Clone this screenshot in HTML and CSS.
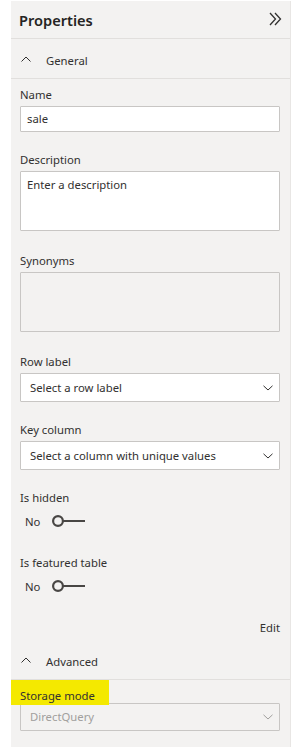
FILE: index.html
```html
<!DOCTYPE html>
<html>
 <head>
  <title>Properties</title>
  <link rel="stylesheet" href="styles.css">
 </head>
<body>
<div class="pane">
 <div class="pane-head">
  <span class="pane-title">Properties</span>
  <svg class="collapse" width="13" height="14" viewBox="0 0 13 14"><path d="M1 1 L6.5 7 L1 13 M6 1 L11.5 7 L6 13" fill="none" stroke="#323130" stroke-width="1.3"/></svg>
 </div>

 <div class="section-head">
  <svg class="chev" width="10" height="6" viewBox="0 0 10 6"><path d="M0.5 5.5 L5 1 L9.5 5.5" fill="none" stroke="#323130" stroke-width="1"/></svg>
  <span>General</span>
 </div>

 <div class="section general">
  <div class="field f-name">
   <label>Name</label>
   <div class="input">sale</div>
  </div>
  <div class="field f-desc">
   <label>Description</label>
   <div class="input area">Enter a description</div>
  </div>
  <div class="field f-syn">
   <label>Synonyms</label>
   <div class="input area disabled"></div>
  </div>
  <div class="field f-row">
   <label>Row label</label>
   <div class="input select">Select a row label
    <svg width="10" height="6" viewBox="0 0 10 6"><path d="M0.5 0.8 L5 5 L9.5 0.8" fill="none" stroke="#323130" stroke-width="1"/></svg>
   </div>
  </div>
  <div class="field f-key">
   <label>Key column</label>
   <div class="input select">Select a column with unique values
    <svg width="10" height="6" viewBox="0 0 10 6"><path d="M0.5 0.8 L5 5 L9.5 0.8" fill="none" stroke="#323130" stroke-width="1"/></svg>
   </div>
  </div>
  <div class="field f-hidden">
   <label>Is hidden</label>
   <div class="toggle"><span>No</span>
    <svg width="36" height="14" viewBox="0 0 36 14"><circle cx="6" cy="7" r="4.9" fill="none" stroke="#484644" stroke-width="2.2"/><path d="M11 7 H33" stroke="#484644" stroke-width="2"/></svg>
   </div>
  </div>
  <div class="field f-feat">
   <label>Is featured table</label>
   <div class="toggle"><span>No</span>
    <svg width="36" height="14" viewBox="0 0 36 14"><circle cx="6" cy="7" r="4.9" fill="none" stroke="#484644" stroke-width="2.2"/><path d="M11 7 H33" stroke="#484644" stroke-width="2"/></svg>
   </div>
  </div>
  <div class="edit">Edit</div>
 </div>

 <div class="section-head">
  <svg class="chev" width="10" height="6" viewBox="0 0 10 6"><path d="M0.5 5.5 L5 1 L9.5 5.5" fill="none" stroke="#323130" stroke-width="1"/></svg>
  <span>Advanced</span>
 </div>

 <div class="section advanced">
  <div class="field f-storage">
   <label><span class="mark">Storage mode</span></label>
   <div class="input select disabled">DirectQuery
    <svg width="10" height="6" viewBox="0 0 10 6"><path d="M0.5 0.8 L5 5 L9.5 0.8" fill="none" stroke="#a19f9d" stroke-width="1"/></svg>
   </div>
  </div>
 </div>
</div>
</body>
</html>
```

FILE: styles.css
```css
body {
 margin: 0;
 background: white;
 font-family: "Noto Sans", sans-serif;
 font-size: 11.3px;
 color: #323130;
}
.pane {
 margin: 1px 0 0 11px;
 height: 746px;
 background: #f3f2f1;
 border-right: 1px solid #e8e6e4;
 overflow: hidden;
}
.pane-head {
 display: flex;
 align-items: center;
 justify-content: space-between;
 height: 37px;
 padding: 0 8px 0 8px;
 border-bottom: 1px solid #e1dfdd;
}
.pane-title {
 font-size: 14.6px;
 font-weight: 600;
 color: #252423;
 margin-top: 1px;
}
.collapse {
 margin-top: -1px;
}
.section-head {
 display: flex;
 align-items: center;
 box-sizing: border-box;
 height: 40px;
 padding: 3px 0 0 10px;
 border-bottom: 1px solid #e1dfdd;
}
.section-head .chev {
 margin-right: 15px;
 margin-top: -3px;
}
.section {
 padding: 0 10px 0 9px;
}
.general {
 padding-top: 6px;
 padding-bottom: 4px;
}
.advanced {
 padding-top: 6px;
}
.field label {
 display: block;
 line-height: 16px;
 padding-top: 2px;
 margin-bottom: 3px;
}
.f-desc { margin-top: 18px; }
.f-syn { margin-top: 20px; }
.f-row { margin-top: 20px; }
.f-key { margin-top: 18px; }
.f-hidden { margin-top: 18px; }
.f-feat { margin-top: 22px; }
.f-storage label { margin-bottom: -1px; }
.input {
 box-sizing: border-box;
 height: 26px;
 background: white;
 border: 1px solid #c8c6c4;
 border-radius: 1px;
 padding: 0 6px;
 line-height: 24px;
}
.area {
 height: 60px;
 line-height: 26px;
}
.disabled {
 background: #f3f2f1;
 color: #a19f9d;
}
.select {
 display: flex;
 align-items: center;
 justify-content: space-between;
 height: 29px;
 padding: 0 6px 0 9px;
}
.f-storage .select {
 height: 28px;
}
.toggle {
 display: flex;
 align-items: center;
 height: 20px;
 margin-top: 5px;
 padding-left: 5px;
}
.toggle span {
 width: 27px;
}
.mark {
 background: #f4e900;
 margin-left: -18px;
 padding: 8px 14px 2px 18px;
}
.edit {
 text-align: right;
 line-height: 16px;
 padding-top: 2px;
 margin-top: 22px;
}
```
